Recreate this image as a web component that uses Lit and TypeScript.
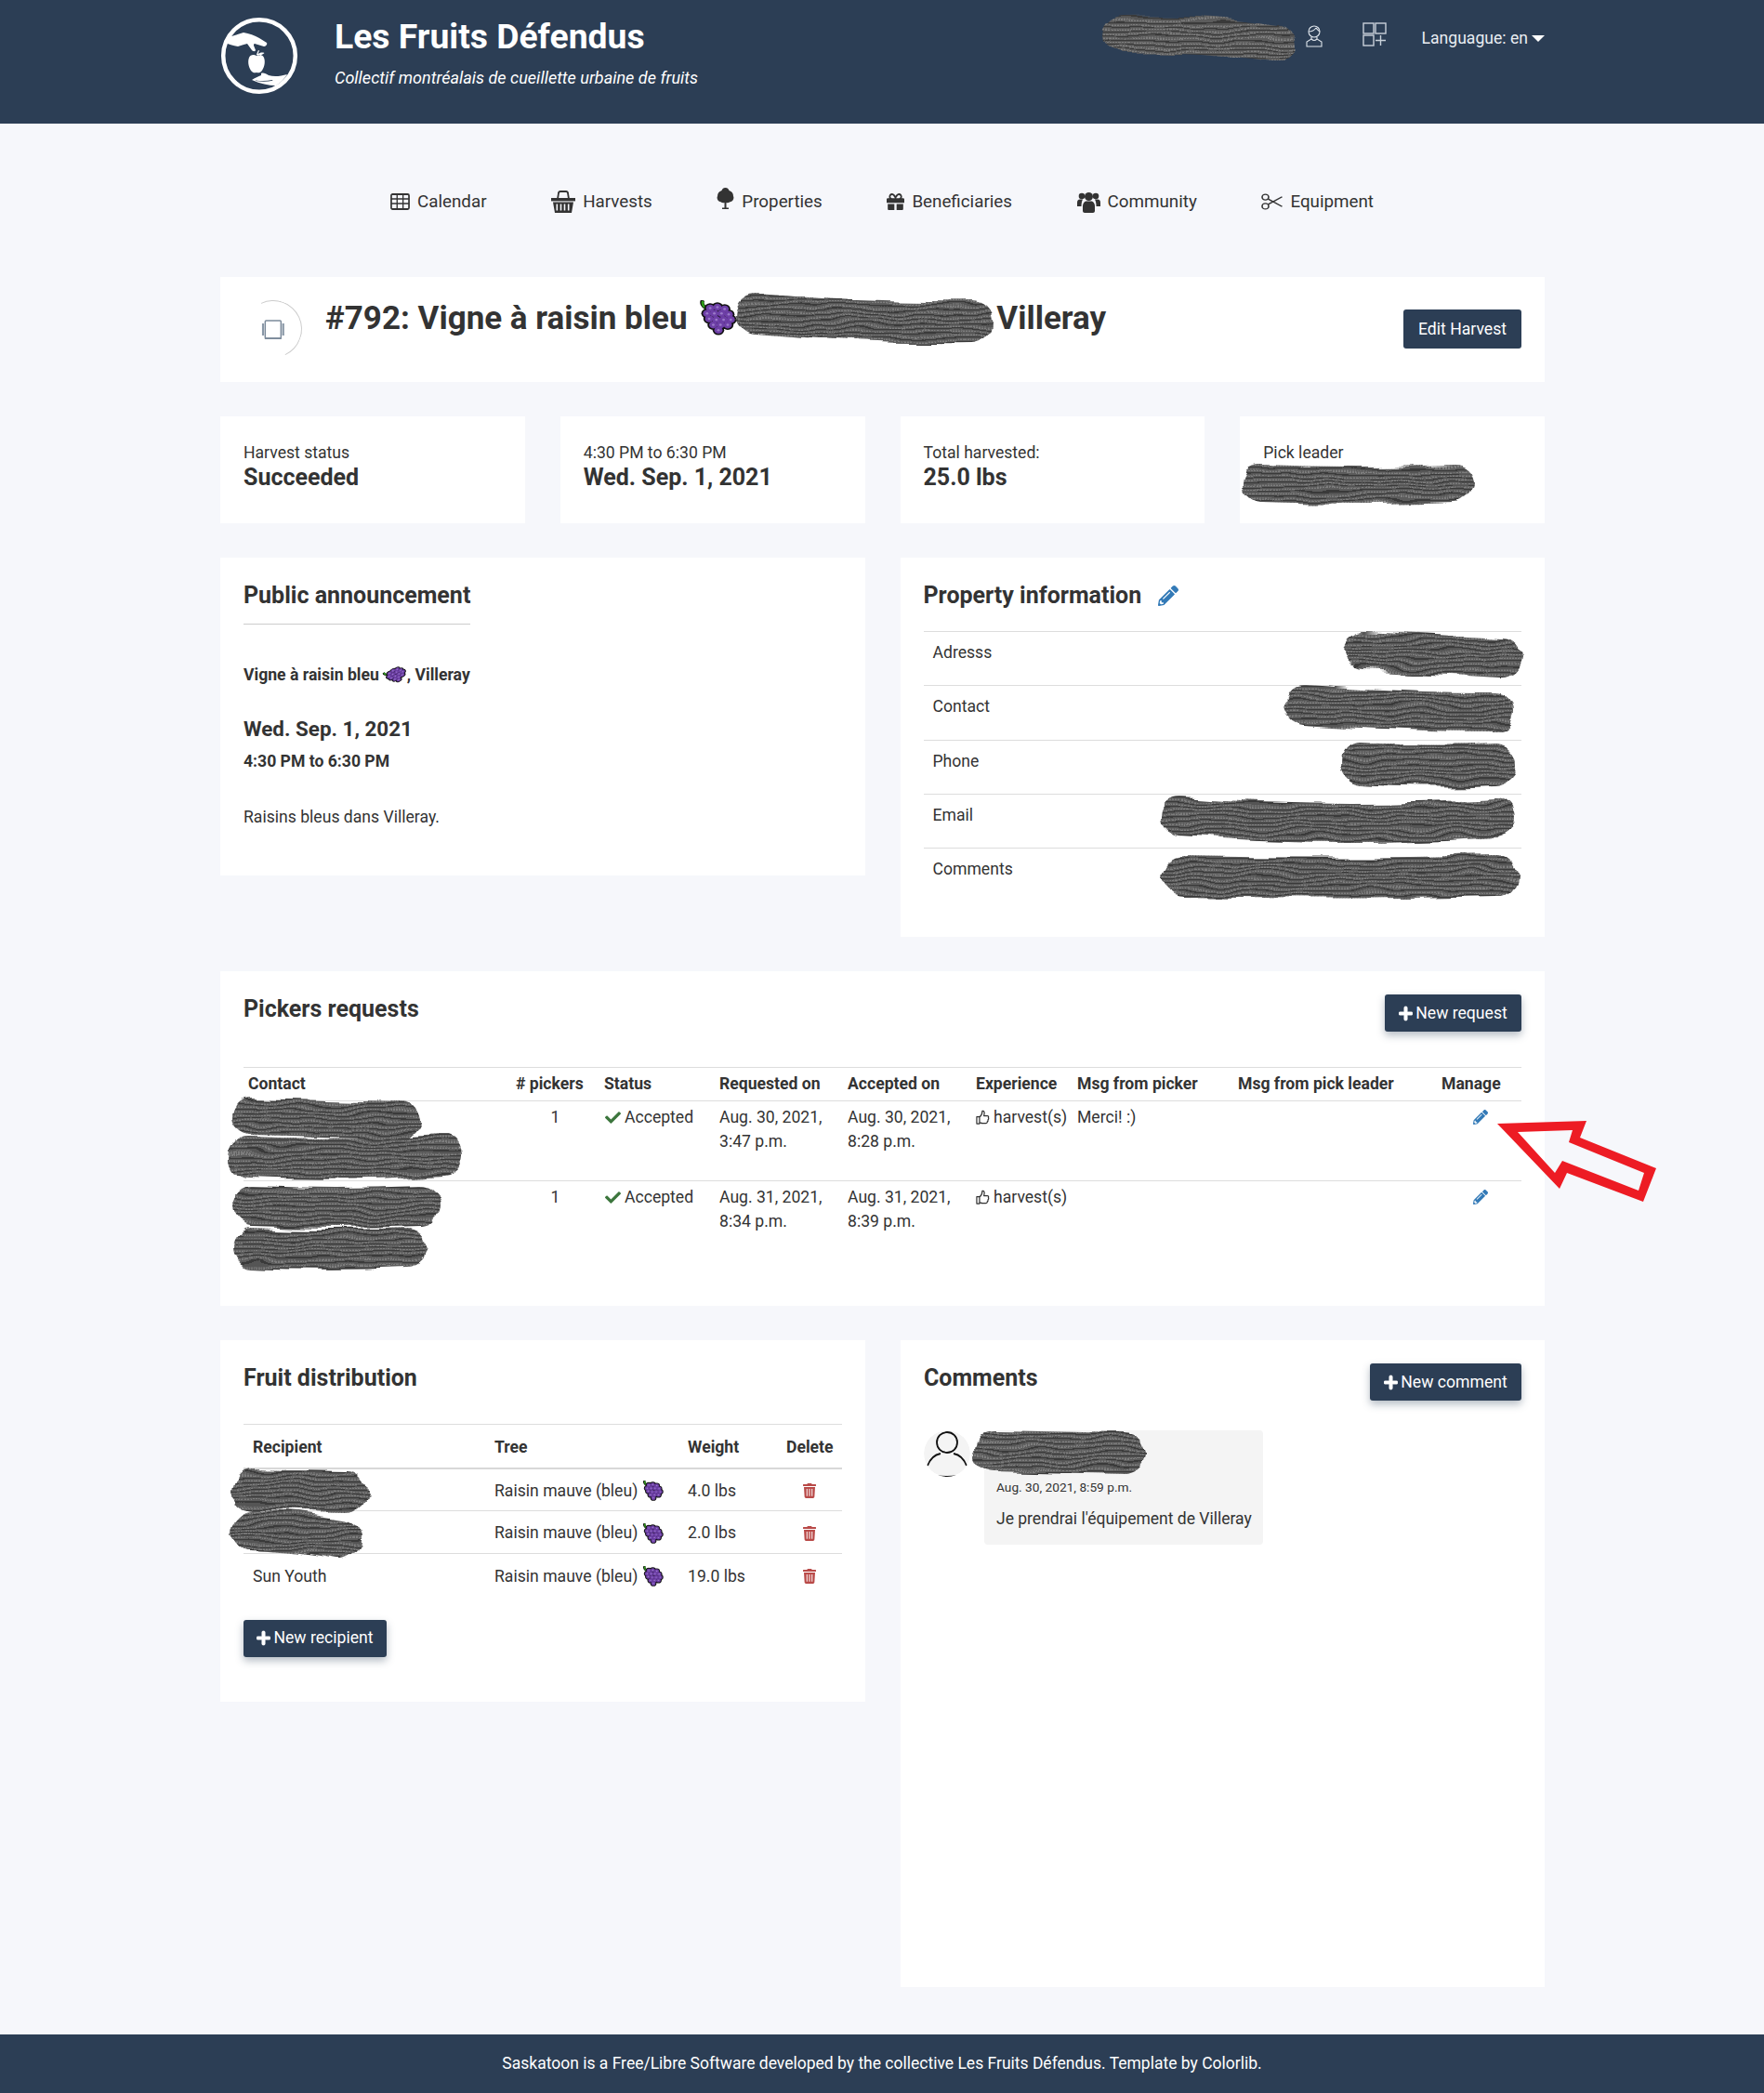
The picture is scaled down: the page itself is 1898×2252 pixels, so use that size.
import { LitElement, html, css, svg } from "lit";
import { customElement } from "lit/decorators.js";

const PENCIL = "M497.9 142.1l-46.1 46.1c-4.7 4.7-12.3 4.7-17 0l-111-111c-4.7-4.7-4.7-12.3 0-17l46.1-46.1c18.7-18.7 49.1-18.7 67.9 0l60.1 60.1c18.8 18.7 18.8 49.1 0 67.9zM284.2 99.8L21.6 362.4.4 483.9c-2.9 16.4 11.4 30.6 27.8 27.8l121.5-21.3 262.6-262.6c4.7-4.7 4.7-12.3 0-17l-111-111c-4.8-4.7-12.4-4.7-17.1 0zM124.1 339.9c-5.5-5.5-5.5-14.3 0-19.8l154-154c5.5-5.5 14.3-5.5 19.8 0s5.5 14.3 0 19.8l-154 154c-5.5 5.5-14.3 5.5-19.8 0zM88 424h48v36.3l-64.5 11.3-31.1-31.1L51.7 376H88v48z";
const CHECK = "M173.898 439.404l-166.4-166.4c-9.997-9.997-9.997-26.206 0-36.204l36.203-36.204c9.997-9.998 26.207-9.998 36.204 0L192 312.69 432.095 72.596c9.997-9.997 26.207-9.997 36.204 0l36.203 36.204c9.997 9.997 9.997 26.206 0 36.204l-294.4 294.401c-9.998 9.997-26.207 9.997-36.204-.001z";
const PLUS = "M416 208H272V64c0-17.67-14.33-32-32-32h-32c-17.67 0-32 14.33-32 32v144H32c-17.67 0-32 14.33-32 32v32c0 17.67 14.33 32 32 32h144v144c0 17.67 14.33 32 32 32h32c17.67 0 32-14.33 32-32V304h144c17.67 0 32-14.33 32-32v-32c0-17.67-14.33-32-32-32z";
const GIFT = "M32 448c0 17.7 14.3 32 32 32h160V320H32v128zm256 32h160c17.7 0 32-14.3 32-32V320H288v160zm192-320h-42.1c6.2-12.1 10.1-25.5 10.1-40 0-48.5-39.5-88-88-88-41.6 0-68.5 21.3-103 68.3-34.5-47-61.4-68.3-103-68.3-48.5 0-88 39.5-88 88 0 14.5 3.8 27.9 10.1 40H32c-17.7 0-32 14.3-32 32v80c0 8.8 7.2 16 16 16h480c8.8 0 16-7.2 16-16v-80c0-17.7-14.3-32-32-32zm-326.1 0c-22.1 0-40-17.9-40-40s17.9-40 40-40c19.9 0 34.6 3.3 86.1 80h-86.1zm206.1 0h-86.1c51.4-76.5 65.7-80 86.1-80 22.1 0 40 17.9 40 40s-17.9 40-40 40z";

const pencil = (cls: string) => html`<svg class=${cls} viewBox="0 0 512 512"><path fill="#337ab7" d=${PENCIL}></path></svg>`;
const plus = html`<svg class="plus" viewBox="0 0 448 512"><path fill="#fff" stroke="#fff" stroke-width="24" d=${PLUS}></path></svg>`;
const check = html`<svg class="check" viewBox="0 0 512 512"><path fill="#3c763d" d=${CHECK}></path></svg>`;
const thumb = html`<svg class="thumb" viewBox="0 0 16 18"><path fill="none" stroke="#333" stroke-width="1.300" stroke-linejoin="round" d="M1 8.500h3.200v8H1zM4.200 9c2-1.500 3-3.500 3.200-7 1.800-.6 2.800 1 2.200 3.500L9.200 7.500h4c1.200 0 1.700 1.200 1.100 2.200.6.800.4 1.800-.4 2.300.3 1 0 1.800-.8 2.200.1 1.200-.6 1.900-1.800 1.900H7.500c-1.400 0-2.200-.7-3.300-.9"></path></svg>`;
const trash = html`<svg class="trash" viewBox="0 0 448 512"><path fill="#b94a48" d="M432 32H312l-9.4-18.7A24 24 0 0 0 281.1 0H166.8a23.72 23.72 0 0 0-21.4 13.3L136 32H16A16 16 0 0 0 0 48v32a16 16 0 0 0 16 16h416a16 16 0 0 0 16-16V48a16 16 0 0 0-16-16zM53.2 467a48 48 0 0 0 47.9 45h245.8a48 48 0 0 0 47.9-45L416 128H32z"></path><path stroke="#fff" stroke-width="32" d="M136 190v250M224 190v250M312 190v250"></path></svg>`;

const grapes = (cls: string) => {
  const dots = [[14,9],[21,8],[28,10],[11,15],[18,15],[25,15],[32,16],[13,21],[20,22],[27,22],[34,22],[17,28],[24,28],[31,28],[22,34]];
  return html`<svg class=${cls} viewBox="4 0 36 40" preserveAspectRatio="none"><path d="M7 0c-2 3 0 7 4 10" fill="none" stroke="#111" stroke-width="4"></path><path d="M7 1c-1 3 0 6 4 9" fill="none" stroke="#2e9e17" stroke-width="2.400"></path>${dots.map(([x, y]) => svg`<circle cx=${x} cy=${y} r="5.600" fill="#111"></circle>`)}${dots.map(([x, y]) => svg`<circle cx=${x} cy=${y} r="4" fill="#6d3fa6"></circle>`)}${dots.map(([x, y]) => svg`<circle cx=${x} cy=${y} r="1.300" fill="#9a79c9"></circle>`)}</svg>`;
};

const NAV = [
  { label: "Calendar", icon: html`<svg class="n-cal" viewBox="0 0 22 18" preserveAspectRatio="none"><rect x="1" y="1" width="20" height="16" rx="1.500" fill="none" stroke="#333" stroke-width="1.800"></rect><path stroke="#333" stroke-width="1.400" d="M1 6h20M1 11h20M7.600 1v16M14.300 1v16"></path></svg>` },
  { label: "Harvests", icon: html`<svg class="n-bas" viewBox="0 0 26 24"><path fill="none" stroke="#333" stroke-width="1.800" d="M7 9l1-6c.1-1 .5-2 2-2h6c1.500 0 1.900 1 2 2l1 6"></path><path fill="#333" d="M0 8h26v3.400H0z"></path><path fill="#333" fill-rule="evenodd" d="M2 12.500h22L22 24H4zm3.500 2v7h1.600v-7zm4.200 0v7h1.600v-7zm4 0v7h1.600v-7zm4.200 0v7h1.600v-7z"></path></svg>` },
  { label: "Properties", icon: html`<svg class="n-tree" viewBox="0 0 19 24"><path fill="#333" d="M9.500 0c2.500 0 3.500 1.700 4 3 3 .8 4.500 3.500 4.500 6 1.300 2.600-.5 6-3.500 6.300-1.500 1-3.300 1-4 .7v5.500h2.500V23h-7v-1.500H8.500V16c-1 .3-2.700.3-4-.7C1.500 15-.3 11.600 1 9c0-2.500 1.500-5.200 4.500-6 .5-1.300 1.500-3 4-3z"></path></svg>` },
  { label: "Beneficiaries", icon: html`<svg class="n-gift" viewBox="0 32 512 448" preserveAspectRatio="none"><path fill="#333" d=${GIFT}></path></svg>` },
  { label: "Community", icon: html`<svg class="n-com" viewBox="0 0 25 24"><g fill="#333"><circle cx="5" cy="6" r="3.300"></circle><circle cx="20" cy="6" r="3.300"></circle><circle cx="12.500" cy="6.500" r="4.500"></circle><path d="M0 17v-4c0-2 1-3.500 3-3.500h3c-1 2-1.500 4-1.500 7.500zM25 17v-4c0-2-1-3.500-3-3.500h-3c1 2 1.500 4 1.500 7.500z"></path><path d="M6 22V17c0-3 1.500-5.500 4-5.500h5c2.500 0 4 2.500 4 5.500v5c0 1-1 2-2 2H8c-1 0-2-1-2-2z"></path></g></svg>` },
  { label: "Equipment", icon: html`<svg class="n-sci" viewBox="0 0 23 22" preserveAspectRatio="none"><g fill="none" stroke="#333" stroke-width="1.600"><ellipse cx="4.500" cy="5" rx="3.500" ry="3.600"></ellipse><ellipse cx="4.500" cy="17" rx="3.500" ry="3.600"></ellipse><path d="M7.500 7.500l15 10M7.500 14.500l15-10"></path></g></svg>` },
];

const PICKERS = [
  { req: ["Aug. 30, 2021,", "3:47 p.m."], acc: ["Aug. 30, 2021,", "8:28 p.m."], msg: "Merci! :)" },
  { req: ["Aug. 31, 2021,", "8:34 p.m."], acc: ["Aug. 31, 2021,", "8:39 p.m."], msg: "" },
];
const DIST = [
  { who: "", w: "4.0 lbs" },
  { who: "", w: "2.0 lbs" },
  { who: "Sun Youth", w: "19.0 lbs" },
];

/* Redaction scribbles: [x0, y0, x1, y1, stroke width, mid-wobble] in page pixels */
const BLOBS: number[][] = [
  [1207, 38, 1374, 48, 40, -4],
  [815, 338, 1046, 347, 44, 3],
  [1357, 520, 1565, 520, 40, 2],
  [1468, 700, 1616, 708, 42, 0],
  [1404, 758, 1608, 766, 42, 2],
  [1466, 821, 1610, 822, 44, 2],
  [1270, 878, 1610, 880, 42, 6],
  [1274, 943, 1610, 942, 44, 2],
  [270, 1202, 432, 1206, 40, 0],
  [267, 1246, 476, 1243, 44, 3],
  [271, 1298, 453, 1298, 42, 2],
  [270, 1342, 438, 1342, 42, 2],
  [270, 1603, 373, 1605, 44, 0],
  [268, 1647, 367, 1657, 44, -2],
  [1070, 1561, 1210, 1564, 44, 0],
];

@customElement("app-root")
export class AppRoot extends LitElement {
  static styles = css`
    :host { display: block; position: relative; height: 2252px; background: #f6f7fb; color: #333; font: 400 17.600px/26.400px Roboto, "Liberation Sans", sans-serif; overflow: hidden; }
    * { box-sizing: border-box; }
    h1, h2, h3, h4, p { margin: 0; }
    svg { display: block; flex: none; }

    .head { height: 133px; background: #2c3e55; color: #fff; padding: 18px 236px 0 237px; display: flex; }
    .logo { width: 84px; height: 84px; }
    .brand { margin-left: 39px; }
    .brand h1 { font: 700 37.300px/40px Roboto, sans-serif; margin-top: 1px; }
    .brand p { font: italic 400 18.050px/24px Roboto, sans-serif; margin-top: 13px; }
    .tools { margin-left: auto; display: flex; align-items: flex-start; color: #e9edf2; }
    .user { width: 18px; height: 24px; margin-top: 9px; }
    .apps { width: 26px; height: 26px; margin: 6px 0 0 43px; }
    .lang { margin-left: 38px; display: flex; align-items: center; gap: 4px; line-height: 24px; margin-top: 11px; }
    .caret { width: 0; height: 0; border-left: 7px solid transparent; border-right: 7px solid transparent; border-top: 7px solid #fff; }

    .nav { height: 165px; padding-top: 3px; display: flex; justify-content: center; align-items: center; gap: 69.600px; font-size: 18.800px; }
    .nav a { display: flex; align-items: center; gap: 8px; }
    .n-cal { width: 21px; height: 18px; }
    .n-bas { width: 26px; height: 24px; }
    .n-tree { width: 19px; height: 24px; margin-top: -6px; }
    .n-gift { width: 19px; height: 18px; }
    .n-com { width: 25px; height: 24px; }
    .n-sci { width: 23px; height: 18px; }

    .wrap { padding: 0 236px 0 237px; display: flex; flex-direction: column; gap: 37px; }
    .card { background: #fff; padding: 25px; }
    .title { height: 113px; display: flex; align-items: flex-start; padding: 25px 25px 0 26px; position: relative; }
    .ring { width: 62px; height: 62px; border-radius: 50%; border: 1px solid transparent; border-top-color: #ccc; border-right-color: #ccc; transform: rotate(20deg); display: flex; align-items: center; justify-content: center; flex: none; }
    .chip { width: 24px; height: 21px; transform: rotate(-20deg); }
    .title h2 { font: 700 35px/40px Roboto, sans-serif; margin: 0 0 0 25px; display: flex; white-space: pre; }
    .title .g { width: 40px; height: 38px; margin: 0 0 0 5px; }
    .title .gap { width: 279px; }
    .btn { background: #2c3e55; color: #fff; border-radius: 3px; display: inline-flex; align-items: center; justify-content: center; gap: 3px; height: 40px; }
    .btn.shadow { box-shadow: 0 4px 8px rgba(44, 62, 85, .35); }
    .edit { position: absolute; right: 25px; top: 35px; width: 127px; height: 42px; }
    .plus { width: 15px; height: 17px; }

    .stats { display: grid; grid-template-columns: repeat(4, 1fr); gap: 38px; }
    .stat { height: 115px; padding: 26px 25px 0; line-height: 26px; }
    .stat b { display: block; font: 700 25px/28px Roboto, sans-serif; }

    .two { display: grid; grid-template-columns: 1fr 1fr; gap: 38px; align-items: start; }
    h3 { font: 700 25px/32px Roboto, sans-serif; }
    .ann { height: 342px; }
    .ann h3 { display: inline-block; padding-bottom: 14px; border-bottom: 1px solid #ccc; }
    .ann .line { font-weight: 700; display: flex; align-items: center; gap: 6px; margin-top: 41px; line-height: 26px; }
    .ann .line svg { width: 24px; height: 22px; transform: rotate(-30deg) scaleY(.8); margin-right: -6px; }
    .ann .date { font: 700 22.400px/30px Roboto, sans-serif; margin-top: 30px; }
    .ann .time { font: 700 17.600px/24px Roboto, sans-serif; margin-top: 8px; }
    .ann .txt { margin-top: 35px; line-height: 26px; }

    .prop { height: 408px; }
    .prop h3 { display: flex; align-items: center; gap: 18px; height: 32px; }
    .phead { width: 22px; height: 22px; }
    .prop table { width: 100%; border-collapse: collapse; margin-top: 22px; }
    .prop td { border-top: 1px solid #ddd; height: 58.300px; padding: 9px 10px 0; vertical-align: top; }

    .pick { height: 360px; position: relative; }
    .pick .btn { position: absolute; right: 25px; top: 25px; width: 147px; }
    .pt { width: 1375px; border-collapse: collapse; table-layout: fixed; position: absolute; top: 103px; left: 25px; }
    .pt th { text-align: left; font-weight: 700; height: 36px; padding: 0 5px; border-top: 1px solid #ddd; border-bottom: 1px solid #ddd; white-space: nowrap; }
    .pt td { height: 86px; padding: 4px 5px 0; vertical-align: top; border-bottom: 1px solid #ddd; }
    .pt tr:last-child td { border-bottom: none; }
    .pt .cn { text-align: center; }
    .pt .nw { white-space: nowrap; }
    .pt .st { display: flex; align-items: center; gap: 4px; }
    .check { width: 17px; height: 17px; margin-left: 1px; }
    .thumb { width: 15px; height: 18px; }
    .c1 { width: 288px; } .c2 { width: 95px; } .c3 { width: 124px; } .c4, .c5 { width: 138px; } .c6 { width: 109px; } .c7 { width: 173px; } .c8 { width: 219px; } .c9 { width: 91px; }
    .mp { width: 16px; height: 16px; margin-left: 34px; margin-top: 5px; }

    .dist { height: 389px; position: relative; }
    .dt { width: 100%; border-collapse: collapse; table-layout: fixed; margin-top: 33px; }
    .dt th { text-align: left; font-weight: 700; height: 47px; padding: 2px 10px 0; border-top: 1px solid #ddd; border-bottom: 2px solid #d8d8d8; }
    .dt td { height: 46px; padding: 2px 10px 0; border-bottom: 1px solid #ddd; }
    .dt tr:last-child td { border-bottom: none; }
    .d1 { width: 260px; } .d2 { width: 208px; } .d3 { width: 106px; } .d4 { width: 70px; }
    .tree { display: flex; align-items: center; gap: 6px; white-space: nowrap; }
    .tree svg { width: 22px; height: 22px; }
    .trash { width: 14px; height: 16px; margin-left: 18px; }
    .nr { margin-top: 25px; width: 154px; }

    .com { height: 696px; position: relative; }
    .com .btn { position: absolute; right: 25px; top: 25px; width: 163px; }
    .thread { display: flex; margin-top: 40px; gap: 15px; }
    .av { width: 50px; height: 50px; border-radius: 50%; }
    .bubble { background: #f4f4f4; width: 300px; height: 123px; border-radius: 4px; padding: 49px 13px 0; }
    .bubble small { display: block; font-size: 13.700px; line-height: 24px; }
    .bubble p { margin-top: 9px; white-space: nowrap; font-size: 17.500px; }

    .foot { position: absolute; left: 0; right: 0; bottom: 0; height: 63px; background: #2c3e55; color: #fff; font-size: 17.500px; display: flex; align-items: center; justify-content: center; }

    .over { position: absolute; left: 0; top: 0; width: 1898px; height: 2252px; pointer-events: none; }
  `;

  render() {
    return html`
      <header class="head">
        <svg class="logo" viewBox="0 0 84 84">
          <circle cx="42" cy="42" r="38.800" fill="none" stroke="#fff" stroke-width="4.500"></circle>
          <path fill="#fff" d="M7 22c6-1 12-3 18-5 6 1 12 3 17 6l8 5c1 2-1 4-3 4l-10-3c-1 0-1 1-1 2l2 5c-1 2-3 1-4 0l-5-7c-4 1-7 2-10 3-5-1-10-2-15-5z"></path>
          <path fill="#fff" d="M39 42c-3-2-7-1-8 2-2 5 0 12 3 15 2 2 4 1 5 1 1 0 3 1 5-1 3-3 5-10 3-15-1-3-5-4-8-2zM39 41c0-1 1-3 2-5l1 .5-1.500 3.500c2-1 4-2 7-1-2 2-5 3-8.500 2z"></path>
          <path fill="#fff" d="M34 68c3-2 7-4 10-5l0-2c2-1 5 0 8 2 6 2 13 1 20-1-3 5-7 9-12 12-8 0-17-2-26-6z"></path>
          <path fill="#2c3e55" d="M38 68.500c6 .8 12 .8 18-.5l.5.7c-6 1.500-13 1.300-18.500.3z"></path>
        </svg>
        <div class="brand">
          <h1>Les Fruits Défendus</h1>
          <p>Collectif montréalais de cueillette urbaine de fruits</p>
        </div>
        <div class="tools">
          <svg class="user" viewBox="0 0 18 24"><g fill="none" stroke="#dfe5ec" stroke-width="1.100"><circle cx="9" cy="7" r="6"></circle><path d="M3 7c3 0 6-1 8-4M11 3c1 2 3 3 4 4M6 13v2L1 18v5h16v-5l-5-3v-2M6 15c2 2 4 2 6 0"></path></g></svg>
          <svg class="apps" viewBox="0 0 26 26"><g fill="none" stroke="#c9d1da" stroke-width="1.400"><rect x="1" y="1" width="11" height="11"></rect><rect x="14" y="1" width="11" height="11"></rect><rect x="1" y="14" width="11" height="11"></rect><path d="M19.500 14v11M14 19.500h11"></path></g></svg>
          <span class="lang">Languague: en <i class="caret"></i></span>
        </div>
      </header>

      <nav class="nav">
        ${NAV.map((n) => html`<a>${n.icon}<span>${n.label}</span></a>`)}
      </nav>

      <main class="wrap">
        <section class="card title">
          <div class="ring">
            <svg class="chip" viewBox="0 0 24 21"><rect x="3.500" y="1" width="17" height="19" rx="1" fill="#fff" stroke="#7c8b9b" stroke-width="1.500"></rect><path d="M3 20.200h18" stroke="#7c8b9b" stroke-width="2"></path><path d="M1 4v13M23 4v13" stroke="#8a98a7" stroke-width="2.500"></path></svg>
          </div>
          <h2>#792: Vigne à raisin bleu ${grapes("g")}<span class="gap"></span>Villeray</h2>
          <a class="btn edit">Edit Harvest</a>
        </section>

        <section class="stats">
          <div class="card stat">Harvest status<b>Succeeded</b></div>
          <div class="card stat">4:30 PM to 6:30 PM<b>Wed. Sep. 1, 2021</b></div>
          <div class="card stat">Total harvested:<b>25.0 lbs</b></div>
          <div class="card stat">Pick leader</div>
        </section>

        <section class="two">
          <div class="card ann">
            <h3>Public announcement</h3>
            <div class="line"><span>Vigne à raisin bleu</span>${grapes("")}<span>, Villeray</span></div>
            <div class="date">Wed. Sep. 1, 2021</div>
            <div class="time">4:30 PM to 6:30 PM</div>
            <p class="txt">Raisins bleus dans Villeray.</p>
          </div>
          <div class="card prop">
            <h3>Property information ${pencil("phead")}</h3>
            <table>
              ${["Adresss", "Contact", "Phone", "Email", "Comments"].map((l) => html`<tr><td>${l}</td></tr>`)}
            </table>
          </div>
        </section>

        <section class="card pick">
          <h3>Pickers requests</h3>
          <a class="btn shadow">${plus}New request</a>
          <table class="pt">
            <colgroup><col class="c1" /><col class="c2" /><col class="c3" /><col class="c4" /><col class="c5" /><col class="c6" /><col class="c7" /><col class="c8" /><col class="c9" /></colgroup>
            <tr><th>Contact</th><th># pickers</th><th>Status</th><th>Requested on</th><th>Accepted on</th><th>Experience</th><th>Msg from picker</th><th>Msg from pick leader</th><th>Manage</th></tr>
            ${PICKERS.map((p) => html`<tr>
              <td></td>
              <td class="cn">1</td>
              <td><span class="st nw">${check}Accepted</span></td>
              <td class="nw">${p.req[0]}<br />${p.req[1]}</td>
              <td class="nw">${p.acc[0]}<br />${p.acc[1]}</td>
              <td><span class="st nw">${thumb}harvest(s)</span></td>
              <td>${p.msg}</td>
              <td></td>
              <td>${pencil("mp")}</td>
            </tr>`)}
          </table>
        </section>

        <section class="two">
          <div class="card dist">
            <h3>Fruit distribution</h3>
            <table class="dt">
              <colgroup><col class="d1" /><col class="d2" /><col class="d3" /><col class="d4" /></colgroup>
              <tr><th>Recipient</th><th>Tree</th><th>Weight</th><th>Delete</th></tr>
              ${DIST.map((d) => html`<tr><td>${d.who}</td><td><span class="tree">Raisin mauve (bleu) ${grapes("")}</span></td><td>${d.w}</td><td>${trash}</td></tr>`)}
            </table>
            <a class="btn shadow nr">${plus}New recipient</a>
          </div>
          <div class="card com">
            <h3>Comments</h3>
            <a class="btn shadow">${plus}New comment</a>
            <div class="thread">
              <svg class="av" viewBox="0 0 50 50">
                <circle cx="25" cy="25" r="25" fill="#f4f4f4"></circle>
                <circle cx="25" cy="13" r="11" fill="none" stroke="#111" stroke-width="1.800"></circle>
                <path d="M4 38c3-8 9-12 14-13M46 38c-3-8-9-12-14-13" fill="none" stroke="#111" stroke-width="1.800"></path>
                <path d="M14 49c6 1 16 1 22 0" fill="none" stroke="#111" stroke-width="1.800"></path>
              </svg>
              <div class="bubble">
                <small>Aug. 30, 2021, 8:59 p.m.</small>
                <p>Je prendrai l'équipement de Villeray</p>
              </div>
            </div>
          </div>
        </section>
      </main>

      <footer class="foot">Saskatoon is a Free/Libre Software developed by the collective Les Fruits Défendus. Template by Colorlib.</footer>

      <svg class="over" viewBox="0 0 1898 2252">
        <defs>
          <pattern id="scr" width="6" height="5" patternUnits="userSpaceOnUse">
            <rect width="6" height="5" fill="#5c5c5c"></rect>
            <path d="M0 1.200h6" stroke="#8c8c8c" stroke-width="1" stroke-dasharray="2 1"></path>
            <path d="M0 3.600h6" stroke="#3a3a3a" stroke-width="1.200"></path>
          </pattern>
          <filter id="wob" x="-10%" y="-40%" width="120%" height="180%" color-interpolation-filters="sRGB">
            <feTurbulence type="fractalNoise" baseFrequency="0.018 0.05" numOctaves="2" seed="4" result="n"></feTurbulence>
            <feDisplacementMap in="SourceGraphic" in2="n" scale="14" xChannelSelector="R" yChannelSelector="G"></feDisplacementMap>
          </filter>
        </defs>
        <g filter="url(#wob)">
          ${BLOBS.map(([x0, y0, x1, y1, w, m]) => svg`<path d="M${x0} ${y0} Q${(x0 + x1) / 2} ${(y0 + y1) / 2 + m * 2} ${x1} ${y1}" fill="none" stroke="url(#scr)" stroke-width=${w} stroke-linecap="round"></path>`)}
        </g>
        <path fill="#ed1c24" fill-rule="evenodd" d="M1611 1209L1707 1206L1700 1224L1782 1257L1768 1293L1686 1262L1678 1279ZM1633 1218L1692 1216L1688 1229L1769 1262L1763 1281L1681 1249L1673 1262Z"></path>
      </svg>
    `;
  }
}
